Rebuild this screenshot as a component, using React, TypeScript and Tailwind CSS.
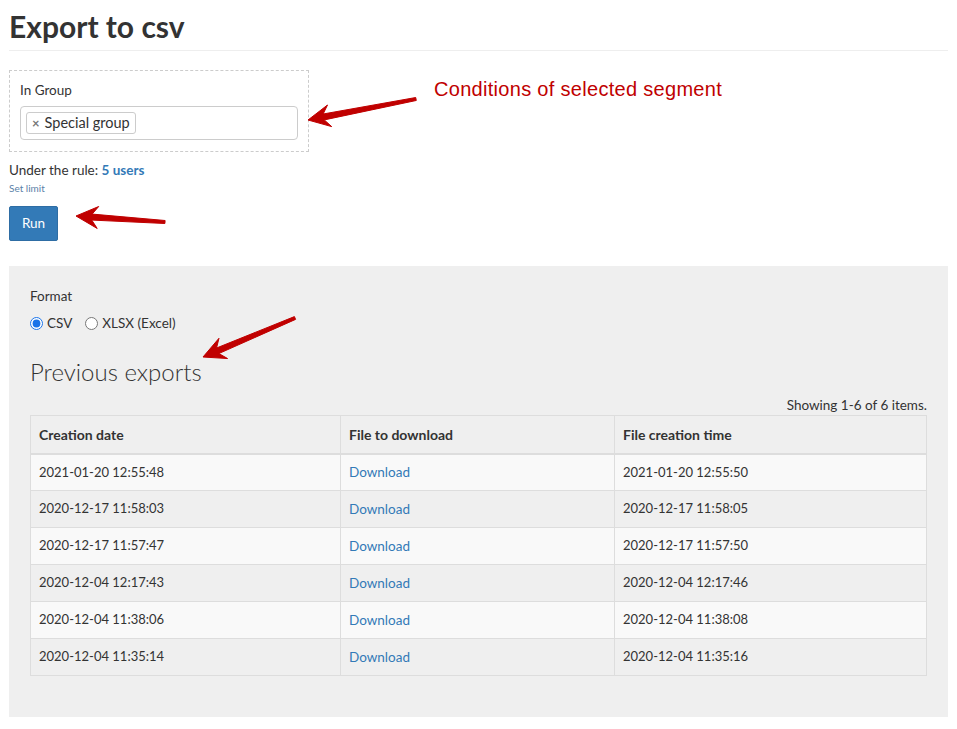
import React from 'react'

const rows = [
  ['2021-01-20 12:55:48', '2021-01-20 12:55:50'],
  ['2020-12-17 11:58:03', '2020-12-17 11:58:05'],
  ['2020-12-17 11:57:47', '2020-12-17 11:57:50'],
  ['2020-12-04 12:17:43', '2020-12-04 12:17:46'],
  ['2020-12-04 11:38:06', '2020-12-04 11:38:08'],
  ['2020-12-04 11:35:14', '2020-12-04 11:35:16'],
]

function Arrow({ x1, y1, x2, y2 }: { x1: number; y1: number; x2: number; y2: number }) {
  // shaft tapers from tail to head, head is a wide barbed triangle
  const dx = x2 - x1
  const dy = y2 - y1
  const len = Math.hypot(dx, dy)
  const ux = dx / len
  const uy = dy / len
  const px = -uy
  const py = ux
  const headLen = 22
  const headW = 11
  const bx = x2 - ux * headLen
  const by = y2 - uy * headLen
  const nx = x2 - ux * (headLen - 6)
  const ny = y2 - uy * (headLen - 6)
  const pts = [
    [x1 + px * 1.5, y1 + py * 1.5],
    [nx + px * 3, ny + py * 3],
    [bx + px * headW, by + py * headW],
    [x2, y2],
    [bx - px * headW, by - py * headW],
    [nx - px * 3, ny - py * 3],
    [x1 - px * 1.5, y1 - py * 1.5],
  ]
  return (
    <polygon
      points={pts.map((p) => p.join(',')).join(' ')}
      fill="#c00000"
      stroke="#c00000"
      strokeWidth="1"
      strokeLinejoin="round"
    />
  )
}

export default function App() {
  return (
    <div className="relative min-h-[729px] w-[957px] bg-white font-['Lato','Liberation_Sans',sans-serif] text-[13.5px] text-[#333]">
      <div className="px-[9px] pt-[8px]">
        <h1 className="border-b border-[#eee] pb-[6px] text-[30px] leading-[36px] font-bold text-[#333]">
          Export to csv
        </h1>

        <div className="mt-[19px] w-[300px] border border-dashed border-[#ccc] px-[10px] pt-[10px] pb-[11px]">
          <div className="leading-[18px] text-[#333]">In Group</div>
          <div className="mt-[7px] flex h-[34px] items-center rounded-[4px] border border-[#ccc] bg-white px-[5px]">
            <span className="flex h-[22px] items-center gap-[5px] rounded-[3px] border border-[#ccc] bg-white px-[5px] text-[14.5px] leading-[20px]">
              <span className="text-[13px] font-bold text-[#777]">×</span>
              Special group
            </span>
          </div>
        </div>

        <div className="mt-[9px] leading-[18px]">
          Under the rule: <span className="font-bold text-[#337ab7]">5 users</span>
        </div>
        <div className="mt-[2px] text-[10px] leading-[14px] text-[#5b7fa8]">Set limit</div>

        <button className="mt-[11px] h-[35px] w-[49px] rounded-[2px] border border-[#2e6da4] bg-[#337ab7] text-[13.5px] text-white">
          Run
        </button>

        <div className="mt-[25px] mb-[12px] bg-[#efefef] px-[21px] pt-[21px] pb-[41px]">
          <div className="leading-[18px]">Format</div>
          <div className="mt-[9px] flex items-center gap-[13px] leading-[18px]">
            <label className="flex items-center gap-[4px]">
              <input type="radio" name="fmt" defaultChecked className="m-0 h-[13px] w-[13px] accent-[#1a73e8]" />
              CSV
            </label>
            <label className="flex items-center gap-[4px]">
              <input type="radio" name="fmt" className="m-0 h-[13px] w-[13px]" />
              XLSX (Excel)
            </label>
          </div>

          <h2 className="mt-[25px] text-[24px] leading-[30px] font-light text-[#333]">Previous exports</h2>

          <div className="mt-[9px] text-right leading-[18px]">Showing 1-6 of 6 items.</div>

          <table className="mt-[1px] w-full border-collapse border border-[#ddd]">
            <thead>
              <tr className="bg-[#efefef]">
                <th className="h-[38px] w-[310px] border border-b-2 border-[#ddd] px-[8px] text-left text-[14px] font-bold">Creation date</th>
                <th className="w-[274px] border border-b-2 border-[#ddd] px-[8px] text-left text-[14px] font-bold">File to download</th>
                <th className="border border-b-2 border-[#ddd] px-[8px] text-left text-[14px] font-bold">File creation time</th>
              </tr>
            </thead>
            <tbody>
              {rows.map((r, i) => (
                <tr key={i} className={i % 2 === 0 ? 'bg-[#f9f9f9]' : 'bg-[#efefef]'}>
                  <td className="h-[37px] border border-[#ddd] px-[8px] text-[13px]">{r[0]}</td>
                  <td className="border border-[#ddd] px-[8px]">
                    <a className="text-[#337ab7]">Download</a>
                  </td>
                  <td className="border border-[#ddd] px-[8px] text-[13px]">{r[1]}</td>
                </tr>
              ))}
            </tbody>
          </table>
        </div>
      </div>

      <div className="absolute top-[77px] left-[434px] font-['Liberation_Sans',sans-serif] text-[20px] leading-[24px] tracking-[0.3px] text-[#c00000]">
        Conditions of selected segment
      </div>

      <svg className="pointer-events-none absolute top-0 left-0" width="957" height="729">
        <Arrow x1={416} y1={99} x2={308} y2={120} />
        <Arrow x1={165} y1={222} x2={76} y2={216} />
        <Arrow x1={295} y1={318} x2={203} y2={357} />
      </svg>
    </div>
  )
}
